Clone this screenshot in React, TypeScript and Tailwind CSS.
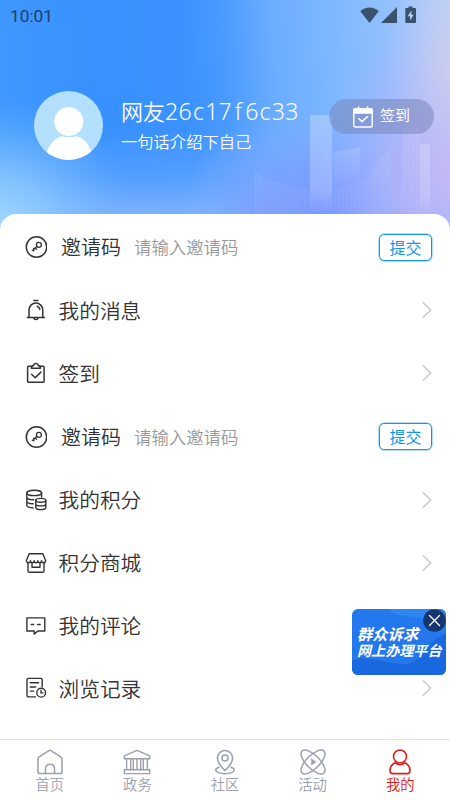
import React from 'react';

interface IconProps {
  className?: string;
}

interface MenuRow {
  icon: React.ReactNode;
  label: string;
  placeholder?: string;
}

const STROKE = { fill: 'none', stroke: 'currentColor', strokeLinecap: 'round', strokeLinejoin: 'round' } as const;

const KeyIcon = () => (
  <svg viewBox="0 0 22 22" className="size-[22px]" {...STROKE} strokeWidth={1.5}>
    <circle cx="11.500" cy="11" r="10.200" />
    <circle cx="13.900" cy="8.800" r="2.500" strokeWidth={1.3} />
    <path d="M11.900 10.500L7.300 14.400M8.600 12.400l.3 2.400M10.200 11.700l1.300 1.700" strokeWidth={1.3} />
  </svg>
);

const BellIcon = () => (
  <svg viewBox="0 0 22 22" className="size-[22px]" {...STROKE} strokeWidth={1.5}>
    <path d="M8.800 1.400h4M2.400 18.400h17M4 18.200V11a6.900 6.900 0 0 1 13.800 0v7.200M8.700 18.800c.2 1.200 1 1.800 2.200 1.800s2-.6 2.200-1.800M12.200 7.200c1.600.6 2.400 1.700 2.600 3.200" />
  </svg>
);

const ClipboardIcon = () => (
  <svg viewBox="0 0 22 22" className="size-[22px]" {...STROKE} strokeWidth={1.5}>
    <path d="M6.400 4.200H3.600c-.6 0-1 .4-1 1v14.100c0 .6.4 1 1 1h14.500c.6 0 1-.4 1-1V5.200c0-.6-.4-1-1-1h-2.800" />
    <path d="M6.300 6.300h9.200c0-1.900-.8-2.700-2.300-2.900-.2-1.300-1-2-2.300-2s-2.100.7-2.300 2c-1.500.2-2.300 1-2.300 2.900zM6.600 12.300l3.600 3.400 5.700-5.600" />
  </svg>
);

const CoinsIcon = () => (
  <svg viewBox="0 0 22 22" className="size-[22px]" {...STROKE} strokeWidth={1.4}>
    <ellipse cx="9.200" cy="3.900" rx="7.400" ry="2.700" />
    <path d="M1.800 4v12.200c0 1.400 2.600 2.500 6.400 2.700M16.600 4v4M1.800 8.200c0 1.400 3 2.500 7 2.600M1.800 12.300c0 1.400 2.600 2.400 6.400 2.500" />
    <ellipse cx="15.800" cy="11.300" rx="5" ry="1.900" />
    <path d="M10.800 11.300v7.300c0 1.100 2.200 2 5 2s5-.9 5-2v-7.300M10.800 15c0 1.100 2.200 1.900 5 1.900s5-.8 5-1.900" />
  </svg>
);

const ShopIcon = () => (
  <svg viewBox="0 0 22 22" className="size-[22px]" {...STROKE} strokeWidth={1.4}>
    <path d="M4.200 1.700h13.600l2.800 6.700c0 1.600-1 2.400-2.100 2.400s-2-.8-2-2c0 1.200-.8 2-1.800 2s-1.800-.8-1.800-2c0 1.200-.9 2-1.900 2s-1.900-.8-1.900-2c0 1.200-.8 2-1.800 2s-1.800-.8-1.800-2c0 1.200-.9 2-2 2s-2.100-.8-2.100-2.400l2.800-6.700z" />
    <path d="M3 11v8c0 .8.500 1.300 1.300 1.300h13.400c.8 0 1.300-.5 1.300-1.300v-8M7 11.500v3.700h8v-3.700" />
  </svg>
);

const CommentIcon = () => (
  <svg viewBox="0 0 22 22" className="size-[22px]" {...STROKE} strokeWidth={1.4}>
    <path d="M1.900 2.900h17.900V16h-7l-3.600 3.100V16H1.900V2.900zM6.100 9.500h2.600M12.600 9.500h2.600" />
  </svg>
);

const HistoryIcon = () => (
  <svg viewBox="0 0 22 22" className="size-[22px]" {...STROKE} strokeWidth={1.4}>
    <path d="M10.400 19.900H3.500c-.9 0-1.500-.6-1.500-1.500V2.900c0-.9.600-1.500 1.500-1.500h12.200c.9 0 1.500.6 1.500 1.500v6.900M5.200 5.800h8.400M5.200 10h5.500M5.200 14.100h3.500" />
    <circle cx="16.200" cy="15.700" r="4.400" />
    <path d="M16 13.400v2.500h2" />
  </svg>
);

const ChevronIcon = () => (
  <svg viewBox="0 0 10 16" className="h-4 w-2.5 text-[#c6c6c6]" {...STROKE} strokeWidth={1.4}>
    <path d="M1.200.800L8.800 8l-7.600 7.200" />
  </svg>
);

const HomeIcon = ({ className }: IconProps) => (
  <svg viewBox="0 0 28 26" className={className} {...STROKE} strokeWidth={1.5}>
    <path d="M2 9.700c0-.8.300-1.200.9-1.600L13 1.600c.7-.4 1.300-.4 2 0l10.100 6.500c.6.400.9.800.9 1.600v13.100c0 1.200-.6 1.800-1.800 1.800H3.800C2.600 24.600 2 24 2 22.800V9.700z" />
    <path d="M9.500 24.500v-5c0-2.700 1.900-4.300 4.500-4.300s4.500 1.600 4.500 4.300v5" />
  </svg>
);

const GovernmentIcon = ({ className }: IconProps) => (
  <svg viewBox="0 0 28 26" className={className} {...STROKE} strokeWidth={1.4}>
    <path d="M1.300 6.900L14 1.300l12.700 5.600v2.900H1.300V6.900zM1.300 20.800h25.400v3.800H1.300v-3.800zM3.600 9.800v11M7.700 9.800v11M10.300 9.800v11M14 9.800v11M17.700 9.800v11M20.300 9.800v11M24.400 9.800v11" />
  </svg>
);

const CommunityIcon = ({ className }: IconProps) => (
  <svg viewBox="0 0 28 26" className={className} {...STROKE} strokeWidth={1.5}>
    <path d="M14 21.500c-4.600-4.300-7.600-7.900-7.600-12.400a7.600 7.600 0 0 1 15.200 0c0 4.500-3 8.100-7.600 12.400z" />
    <circle cx="14" cy="9" r="3" />
    <path d="M8 18.300c-2.100.6-3.300 1.500-3.300 2.700 0 2.100 4 3.700 9.300 3.700s9.300-1.600 9.300-3.700c0-1.200-1.200-2.100-3.300-2.700" />
  </svg>
);

const ActivityIcon = ({ className }: IconProps) => (
  <svg viewBox="0 0 28 26" className={className} {...STROKE} strokeWidth={1.5}>
    <ellipse cx="14" cy="13" rx="15.600" ry="6.600" transform="rotate(45 14 13)" />
    <ellipse cx="14" cy="13" rx="15.600" ry="6.600" transform="rotate(-45 14 13)" />
    <path d="M12.300 9.800v6.400l4.500-3.200z" fill="currentColor" strokeWidth={0.5} />
  </svg>
);

const MineIcon = ({ className }: IconProps) => (
  <svg viewBox="0 0 28 26" className={className} {...STROKE} strokeWidth={1.6}>
    <circle cx="14" cy="7.500" r="6.500" />
    <path d="M9.100 13.800C5.600 15.400 4 18 4 21.800c0 1.900.9 2.800 2.800 2.800h14.400c1.900 0 2.800-.9 2.800-2.800 0-3.800-1.600-6.400-5.100-8-2.900 2.100-6.900 2.100-9.800 0z" />
  </svg>
);

const MENU: MenuRow[] = [
  { icon: <KeyIcon />, label: '邀请码', placeholder: '请输入邀请码' },
  { icon: <BellIcon />, label: '我的消息' },
  { icon: <ClipboardIcon />, label: '签到' },
  { icon: <KeyIcon />, label: '邀请码', placeholder: '请输入邀请码' },
  { icon: <CoinsIcon />, label: '我的积分' },
  { icon: <ShopIcon />, label: '积分商城' },
  { icon: <CommentIcon />, label: '我的评论' },
  { icon: <HistoryIcon />, label: '浏览记录' },
];

const TABS = [
  { Icon: HomeIcon, label: '首页' },
  { Icon: GovernmentIcon, label: '政务' },
  { Icon: CommunityIcon, label: '社区' },
  { Icon: ActivityIcon, label: '活动' },
  { Icon: MineIcon, label: '我的', active: true },
];

const USER_ID = '26c17f6c33';

const HeaderBackdrop = () => (
  <svg viewBox="0 0 450 240" className="col-start-1 row-start-1 h-[240px] w-[450px]">
    <defs>
      <linearGradient id="sky" x1="0" y1="30" x2="450" y2="0" gradientUnits="userSpaceOnUse">
        <stop offset="0" stopColor="#3f98ff" />
        <stop offset="0.2" stopColor="#3891ff" />
        <stop offset="0.4" stopColor="#3b92ff" />
        <stop offset="0.49" stopColor="#4a9aff" />
        <stop offset="0.6" stopColor="#6aadff" />
        <stop offset="0.74" stopColor="#7fb8ff" />
        <stop offset="0.88" stopColor="#97c1fd" />
        <stop offset="1" stopColor="#bccff4" />
      </linearGradient>
      <linearGradient id="haze" x1="0" y1="130" x2="0" y2="225" gradientUnits="userSpaceOnUse">
        <stop offset="0" stopColor="#86b6ff" stopOpacity="0" />
        <stop offset="0.5" stopColor="#86b6ff" stopOpacity="0.35" />
        <stop offset="1" stopColor="#8db9ff" stopOpacity="0.95" />
      </linearGradient>
      <radialGradient id="cyan" cx="0" cy="0" r="1" gradientTransform="translate(-10 225) scale(150 130)" gradientUnits="userSpaceOnUse">
        <stop offset="0" stopColor="#a2daff" />
        <stop offset="0.4" stopColor="#8fccff" stopOpacity="0.7" />
        <stop offset="1" stopColor="#6cb4ff" stopOpacity="0" />
      </radialGradient>
      <radialGradient id="violet" cx="0" cy="0" r="1" gradientTransform="translate(325 225) scale(150 125)" gradientUnits="userSpaceOnUse">
        <stop offset="0" stopColor="#7790ff" />
        <stop offset="0.5" stopColor="#7b9cff" stopOpacity="0.7" />
        <stop offset="1" stopColor="#84b0ff" stopOpacity="0" />
      </radialGradient>
      <radialGradient id="lilac" cx="0" cy="0" r="1" gradientTransform="translate(465 170) scale(150 160)" gradientUnits="userSpaceOnUse">
        <stop offset="0" stopColor="#cbbcf4" />
        <stop offset="0.45" stopColor="#b9b3f8" stopOpacity="0.75" />
        <stop offset="1" stopColor="#a0b0ff" stopOpacity="0" />
      </radialGradient>
      <radialGradient id="peach" cx="0" cy="0" r="1" gradientTransform="translate(475 65) scale(95 110)" gradientUnits="userSpaceOnUse">
        <stop offset="0" stopColor="#d9d2ea" />
        <stop offset="0.3" stopColor="#d3d1ed" stopOpacity="0.7" />
        <stop offset="1" stopColor="#c0ccf4" stopOpacity="0" />
      </radialGradient>
      <linearGradient id="tower" x1="0" y1="0" x2="0" y2="1">
        <stop offset="0" stopColor="#fff" stopOpacity="0.26" />
        <stop offset="0.75" stopColor="#fff" stopOpacity="0.2" />
        <stop offset="1" stopColor="#fff" stopOpacity="0.02" />
      </linearGradient>
      <linearGradient id="fade" x1="0" y1="0" x2="0" y2="1">
        <stop offset="0" stopColor="#fff" stopOpacity="0.14" />
        <stop offset="1" stopColor="#fff" stopOpacity="0" />
      </linearGradient>
      <pattern id="slats" width="2.600" height="8" patternUnits="userSpaceOnUse">
        <path d="M0.500 0v8" stroke="#fff" strokeOpacity="0.09" />
      </pattern>
    </defs>
    <rect width="450" height="240" fill="url(#sky)" />
    <rect width="450" height="240" fill="url(#haze)" />
    <rect width="450" height="240" fill="url(#cyan)" />
    <rect width="450" height="240" fill="url(#violet)" />
    <rect width="450" height="240" fill="url(#lilac)" />
    <rect width="450" height="240" fill="url(#peach)" />
    <rect x="310" y="115" width="22" height="100" fill="url(#tower)" />
    <path d="M333 152l27-5v38c-8 4-18 6-27 6z" fill="url(#fade)" />
    <rect x="420" y="144" width="10" height="70" fill="url(#tower)" opacity="0.8" />
    <path d="M254 171c17 11 34 15 56 18v26h-56zM333 190c24-2 38-12 40-25l18-17v36l12 4v-60h17v87h-87z" fill="url(#slats)" />
    <path d="M254 171c17 11 34 15 56 18v26h-56zM333 190c24-2 38-12 40-25l18-17v36l12 4v-60h17v87h-87z" fill="url(#fade)" opacity="0.35" />
  </svg>
);

const StatusBar = () => (
  <div className="flex h-8 items-center justify-between pl-2.5 pr-[34px] text-[#1d3f69]">
    <span className="font-['Roboto',sans-serif] text-[17.300px] leading-8">10:01</span>
    <svg viewBox="0 0 56 18" className="mt-[-2px] h-[18px] w-14 text-[#39516d]" fill="currentColor">
      <path d="M9.500 17L.3 5.200C3 2.800 6 1.500 9.500 1.500s6.500 1.300 9.200 3.700L9.500 17zM21 17L37 1v16H21z" />
      <path d="M46.300 2h2.200V.4h4V2H55c.6 0 1 .4 1 1v13c0 .6-.4 1-1 1h-8.700c-.6 0-1-.4-1-1V3c0-.6.4-1 1-1z" />
      <path d="M51.400 4.500l-3.700 5.700h2.400v4.300l3.500-5.700h-2.200V4.500z" fill="#b9cff3" />
    </svg>
  </div>
);

const Profile = () => (
  <div className="flex pl-[34px] pr-4 pt-[59px]">
    <svg viewBox="0 0 68 68" className="size-[69px] shrink-0">
      <clipPath id="avatar">
        <circle cx="34" cy="34" r="34" />
      </clipPath>
      <g clipPath="url(#avatar)">
        <rect width="68" height="68" fill="#b4e0ff" />
        <path d="M10 70c2-16 11-25 19-25.500 4 1.600 8 1.600 12 0C49 45 57 54 59 70z" fill="#fff" />
        <circle cx="34.300" cy="30" r="14.800" fill="#fff" stroke="#b4e0ff" strokeWidth="1" />
      </g>
    </svg>
    <div className="ml-[18px] pt-[3px] text-white">
      <div className="whitespace-nowrap text-[22px] leading-8">
        <span className="font-[350]">网友</span>
        <span className="font-['Noto_Sans',sans-serif] text-[23px]">
          {USER_ID.split('').map((char, i) => (
            <span key={i} className="inline-block w-[13.350px] text-center font-[350]">{char}</span>
          ))}
        </span>
      </div>
      <p className="mt-px text-[16.300px] font-[350] leading-[26px]">一句话介绍下自己</p>
    </div>
    <button className="ml-auto mt-2 flex h-[35px] w-[105px] shrink-0 items-center justify-center gap-[7px] rounded-full bg-[#7482b4]/50 pb-0.5 text-[15px] text-white">
      <svg viewBox="0 0 20 22" className="mt-0.5 h-[22px] w-5" {...STROKE} strokeWidth={1.4}>
        <rect x="0.800" y="3" width="18.400" height="18" rx="1.500" />
        <path d="M1 3h18v4H1z" fill="currentColor" />
        <path d="M5.500 1v2M14.500 1v2M6 12.700l3 3 5.600-5.200" strokeWidth={1.6} />
      </svg>
      签到
    </button>
  </div>
);

const Row = ({ icon, label, placeholder }: MenuRow) =>
  placeholder ? (
    <div className="flex h-16 items-center pl-[25px] pr-[18px] text-[#333]">
      {icon}
      <span className="ml-3.5 text-[20px] font-[350]">{label}</span>
      <span className="ml-[13px] text-[17.400px] font-[350] text-[#999]">{placeholder}</span>
      <button className="ml-auto flex h-[27px] w-[53px] items-center justify-center rounded-[5px] border-[1.500px] border-[#1296ed] pb-px text-[16px] text-[#1296ed] ring-[0.500px] ring-[#1296ed]/60">
        提交
      </button>
    </div>
  ) : (
    <div className="flex h-[62.800px] items-center pl-[25px] pr-[18px] text-[#333]">
      {icon}
      <span className="ml-[11.500px] flex-1 text-[20.700px] font-[350]">{label}</span>
      <ChevronIcon />
    </div>
  );

const PromoBanner = () => (
  <div className="absolute left-[352px] top-[609px] z-20 h-[66px] w-[94px] overflow-hidden rounded-md bg-[#2478ed] text-white">
    <svg viewBox="0 0 94 66" className="absolute inset-0 size-full">
      <path d="M0 52c18-8 35 5 54 3s20-25 40-30v41H0z" fill="#1a68e0" />
      <path d="M36 0c14 12 30 4 58 16V0z" fill="#2c86f4" />
      <circle cx="82.500" cy="11.500" r="11.300" fill="#15366e" />
      <path d="M77.500 6.500l10 10M87.500 6.500l-10 10" stroke="#fff" strokeWidth="1.300" strokeLinecap="round" />
    </svg>
    <p className="relative whitespace-nowrap pl-[5px] pt-[17px] text-[14.100px] font-bold italic leading-[15.500px]">
      <span className="text-[15.300px]">群众诉求</span>
      <br />
      网上办理平台
    </p>
  </div>
);

const TabBar = () => (
  <nav className="flex h-[61px] border-t border-[#e4e4e4] bg-white px-1.5 text-[#9aa0b0]">
    {TABS.map(({ Icon, label, active }) => (
      <div key={label} className={`flex flex-1 flex-col items-center pt-[9px] ${active ? 'text-[#d9201c]' : ''}`}>
        <Icon className="h-[26px] w-7" />
        <span className="text-[14.300px] font-[350] leading-[17px]">{label}</span>
      </div>
    ))}
  </nav>
);

export default function App() {
  return (
    <div className="relative flex h-[800px] w-[450px] flex-col overflow-hidden bg-white font-['Noto_Sans_CJK_SC',sans-serif]">
      <header className="grid h-[240px] shrink-0">
        <HeaderBackdrop />
        <div className="z-10 col-start-1 row-start-1">
          <StatusBar />
          <Profile />
        </div>
      </header>
      <main className="z-10 -mt-[26px] flex-1 rounded-t-[16px] bg-white pt-[1px]">
        {MENU.map((row, i) => (
          <Row key={i} {...row} />
        ))}
      </main>
      <TabBar />
      <PromoBanner />
    </div>
  );
}
